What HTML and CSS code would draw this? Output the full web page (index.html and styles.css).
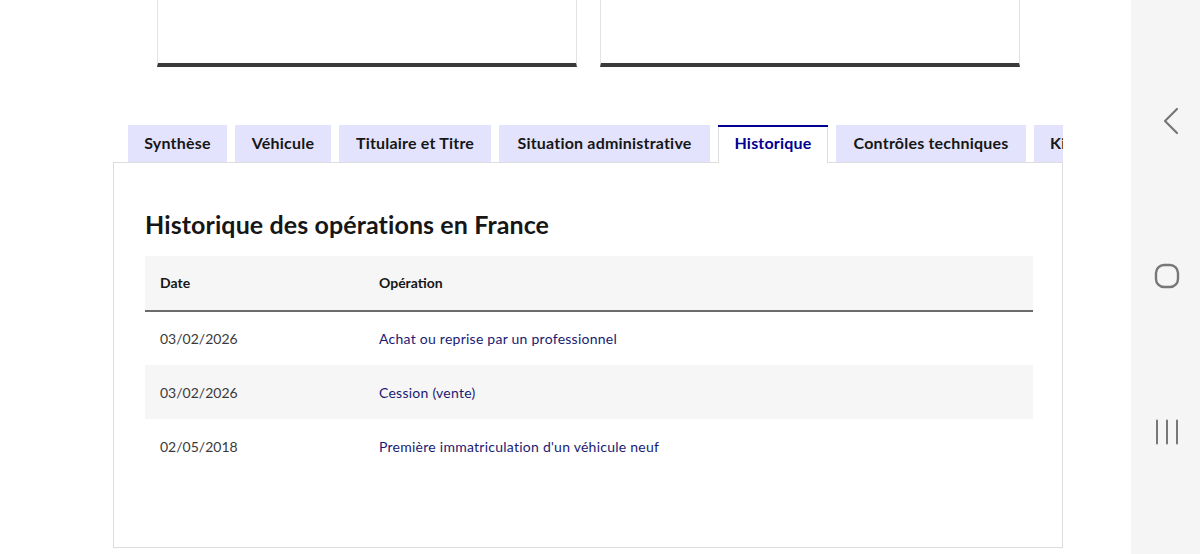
FILE: index.html
```html
<!DOCTYPE html>
<html lang="fr">
<head>
<meta charset="utf-8">
<title>Historique</title>
<link rel="stylesheet" href="styles.css">
</head>
<body>
<div class="screen">
  <main class="page">
    <div class="cards">
      <div class="card"></div>
      <div class="card"></div>
    </div>
    <div class="tabs">
      <ul class="tab-list">
        <li class="tab t1">Synthèse</li>
        <li class="tab t2">Véhicule</li>
        <li class="tab t3">Titulaire et Titre</li>
        <li class="tab t4">Situation administrative</li>
        <li class="tab t5 active">Historique</li>
        <li class="tab t6">Contrôles techniques</li>
        <li class="tab t7">Kilométrage</li>
      </ul>
      <section class="panel">
        <h3 class="title">Historique des opérations en France</h3>
        <table class="table">
          <thead>
            <tr><th class="c-date">Date</th><th>Opération</th></tr>
          </thead>
          <tbody>
            <tr><td class="c-date">03/02/2026</td><td class="op">Achat ou reprise par un professionnel</td></tr>
            <tr class="alt"><td class="c-date">03/02/2026</td><td class="op">Cession (vente)</td></tr>
            <tr><td class="c-date">02/05/2018</td><td class="op">Première immatriculation d'un véhicule neuf</td></tr>
          </tbody>
        </table>
      </section>
    </div>
  </main>
  <nav class="navbar">
    <svg class="nav-icon back" width="24" height="28" viewBox="0 0 24 28"><path d="M18 2 L6 14 L18 26" fill="none" stroke="#777" stroke-width="2.2" stroke-linecap="round" stroke-linejoin="round"/></svg>
    <svg class="nav-icon home" width="26" height="26" viewBox="0 0 26 26"><rect x="2" y="2" width="22" height="22" rx="8" fill="none" stroke="#777" stroke-width="2.4"/></svg>
    <svg class="nav-icon recent" width="24" height="26" viewBox="0 0 24 26"><path d="M2 1.5 V24.5 M12 1.5 V24.5 M22 1.5 V24.5" fill="none" stroke="#777" stroke-width="2" stroke-linecap="round"/></svg>
  </nav>
</div>
</body>
</html>
```
FILE: styles.css
```css
* { box-sizing: border-box; }
html, body { margin: 0; padding: 0; }
body {
  width: 1200px;
  height: 554px;
  overflow: hidden;
  background: #fff;
  font-family: "Lato", "Noto Sans", sans-serif;
  color: #161616;
}
.screen {
  display: flex;
  width: 1200px;
  height: 554px;
}
.page {
  flex: 0 0 1131px;
  overflow: hidden;
}
.cards {
  display: flex;
  gap: 23px;
  padding-left: 157px;
}
.card {
  width: 420px;
  height: 67px;
  border-left: 1px solid #e3e3e3;
  border-right: 1px solid #e3e3e3;
  border-bottom: 4px solid #3a3a3a;
  background: #fff;
}
.tabs {
  margin-top: 58px;
  margin-left: 113px;
  width: 950px;
}
.tab-list {
  list-style: none;
  margin: 0 0 -1px;
  padding: 0 0 0 15px;
  display: flex;
  align-items: flex-start;
  gap: 8px;
  height: 38px;
  overflow: hidden;
  white-space: nowrap;
  position: relative;
  z-index: 1;
}
.tab {
  flex: 0 0 auto;
  height: 37px;
  display: flex;
  align-items: center;
  justify-content: center;
  background: #e3e3fd;
  color: #161616;
  font-size: 16px;
  font-weight: 700;
  letter-spacing: 0.2px;
  padding-bottom: 2px;
}
.t1 { width: 99px; }
.t2 { width: 96px; }
.t3 { width: 152px; }
.t4 { width: 211px; }
.t5 { width: 110px; }
.t6 { width: 190px; }
.t7 { width: 140px; justify-content: flex-start; padding-left: 16px; }
.tab.active {
  background: #fff;
  color: #000091;
  box-shadow: inset 0 2px 0 #000091, inset 1px 0 0 #ddd, inset -1px 0 0 #ddd;
  height: 38px;
  padding-bottom: 3px;
}
.panel {
  border: 1px solid #ddd;
  height: 386px;
  padding: 43px 30px 0 31px;
  background: #fff;
}
.title {
  margin: 0 0 14px;
  font-size: 25px;
  line-height: 36px;
  font-weight: 700;
  color: #161616;
  letter-spacing: 0.1px;
}
.table {
  width: 888px;
  border-collapse: collapse;
  font-size: 14px;
}
.table th, .table td {
  text-align: left;
  padding: 0 15px;
  height: 54px;
}
.table th {
  font-weight: 700;
  background: #f6f6f6;
  height: 55px;
  padding-bottom: 2px;
  border-bottom: 2px solid #6b6b6b;
  color: #161616;
}
.table .c-date { width: 219px; color: #3a3a3a; }
.table th.c-date { color: #161616; }
.table td.op { color: #1a1a72; letter-spacing: 0.25px; }
.table tr.alt td { background: #f6f6f6; }
.navbar {
  flex: 1;
  background: #f5f5f5;
  position: relative;
}
.nav-icon { position: absolute; }
.back { left: 28px; top: 107px; }
.home { left: 23px; top: 263px; }
.recent { left: 24px; top: 419px; }
```
